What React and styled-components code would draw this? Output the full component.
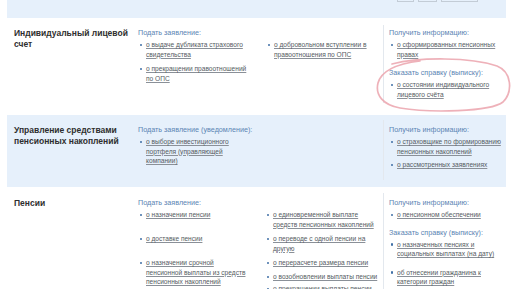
import React from "react";
import styled, { createGlobalStyle } from "styled-components";

const GlobalStyle = createGlobalStyle`
  html, body {
    margin: 0;
    padding: 0;
    background: #ffffff;
  }
  body {
    font-family: "Liberation Sans", Arial, sans-serif;
    overflow: hidden;
  }
`;

const Page = styled.div`
  position: relative;
  margin-left: 7px;
  width: 499px;
`;

const TopBand = styled.div`
  height: 18px;
  background: #e6f0fb;
  display: flex;
  justify-content: flex-end;
  align-items: flex-start;
  gap: 4px;
  padding-right: 28px;
`;

const Tab = styled.div`
  width: ${(p) => p.$w}px;
  height: 1px;
  border: 1px solid #c3ccd6;
  border-top: none;
`;

const Section = styled.section`
  display: grid;
  grid-template-columns: 124px 126px 119px 1px 1fr;
  align-items: start;
  background: ${(p) => (p.$tinted ? "#e6f0fb" : "#ffffff")};
  height: ${(p) => p.$h}px;
  padding: ${(p) => p.$top}px 0 0 7px;
  box-sizing: border-box;
`;

const Title = styled.h2`
  margin: 0;
  font-size: 8.5px;
  line-height: 11px;
  font-weight: 700;
  color: #2e2e2e;
`;

const Column = styled.div`
  padding-left: ${(p) => p.$pad || 0}px;
`;

const Divider = styled.div`
  align-self: stretch;
  background: #e3e8ee;
  margin: ${(p) => p.$m};
`;

const Heading = styled.div`
  font-size: 7.2px;
  line-height: 10px;
  color: #5b84b3;
  margin-top: ${(p) => p.$mt || 0}px;
  white-space: nowrap;
`;

const Spacer = styled.div`
  height: 10px;
`;

const List = styled.ul`
  list-style: none;
  margin: 2px 0 0;
  padding: 0;
`;

const Item = styled.li`
  position: relative;
  padding-left: 8px;
  margin-top: ${(p) => p.$mt || 0}px;
  font-size: 6.6px;
  line-height: 9.5px;
  white-space: nowrap;

  &::before {
    content: "";
    position: absolute;
    left: 2px;
    top: 3.8px;
    width: 2.3px;
    height: 2.3px;
    border-radius: 50%;
    background: #3f6fa6;
  }
`;

const Link = styled.a`
  color: #555b62;
  text-decoration: underline;
  text-decoration-color: #8a9098;
  text-underline-offset: 1px;
`;

const Mark = styled.svg`
  position: absolute;
  left: 0;
  top: 0;
  pointer-events: none;
`;

const L = ({ mt, lines }) => (
  <Item $mt={mt}>
    <Link href="#">
      {lines.map((t, i) => (
        <React.Fragment key={i}>
          {i > 0 && <br />}
          {t}
        </React.Fragment>
      ))}
    </Link>
  </Item>
);

export default function App() {
  return (
    <>
      <GlobalStyle />
      <Page>
        <TopBand>
          <Tab $w={15} />
          <Tab $w={17} />
          <Tab $w={35} />
        </TopBand>

        <Section $h={97} $top={10}>
          <Title>
            Индивидуальный лицевой
            <br />
            счет
          </Title>
          <Column>
            <Heading>Подать заявление:</Heading>
            <List>
              <L lines={["о выдаче дубликата страхового", "свидетельства"]} />
              <L mt={5} lines={["о прекращении правоотношений", "по ОПС"]} />
            </List>
          </Column>
          <Column $pad={2}>
            <Spacer />
            <List>
              <L lines={["о добровольном вступлении в", "правоотношения по ОПС"]} />
            </List>
          </Column>
          <Divider $m="-3px 0 12px" />
          <Column $pad={5}>
            <Heading>Получить информацию:</Heading>
            <List>
              <L lines={["о сформированных пенсионных", "правах"]} />
            </List>
            <Heading $mt={9}>Заказать справку (выписку):</Heading>
            <List>
              <L lines={["о состоянии индивидуального", "лицевого счёта"]} />
            </List>
          </Column>
        </Section>

        <Section $tinted $h={72} $top={10}>
          <Title>
            Управление средствами
            <br />
            пенсионных накоплений
          </Title>
          <Column>
            <Heading>Подать заявление (уведомление):</Heading>
            <List>
              <L lines={["о выборе инвестиционного", "портфеля (управляющей", "компании)"]} />
            </List>
          </Column>
          <Column />
          <Divider $m="-5px 0 7px" />
          <Column $pad={5}>
            <Heading>Получить информацию:</Heading>
            <List>
              <L lines={["о страховщике по формированию", "пенсионных накоплений"]} />
              <L mt={4} lines={["о рассмотренных заявлениях"]} />
            </List>
          </Column>
        </Section>

        <Section $h={110} $top={11}>
          <Title>Пенсии</Title>
          <Column>
            <Heading>Подать заявление:</Heading>
            <List>
              <L lines={["о назначении пенсии"]} />
              <L mt={14.5} lines={["о доставке пенсии"]} />
              <L
                mt={14.5}
                lines={["о назначении срочной", "пенсионной выплаты из средств", "пенсионных накоплений"]}
              />
            </List>
          </Column>
          <Column $pad={1}>
            <Spacer />
            <List>
              <L lines={["о единовременной выплате", "средств пенсионных накоплений"]} />
              <L mt={5} lines={["о переводе с одной пенсии на", "другую"]} />
              <L mt={5} lines={["о перерасчете размера пенсии"]} />
              <L mt={4.5} lines={["о возобновлении выплаты пенсии"]} />
              <L mt={2.5} lines={["о прекращении выплаты пенсии"]} />
            </List>
          </Column>
          <Divider $m="-5px 0 0" />
          <Column $pad={5}>
            <Heading>Получить информацию:</Heading>
            <List>
              <L lines={["о пенсионном обеспечении"]} />
            </List>
            <Heading $mt={8}>Заказать справку (выписку):</Heading>
            <List>
              <L lines={["о назначенных пенсиях и", "социальных выплатах (на дату)"]} />
              <L mt={9} lines={["об отнесении гражданина к", "категории граждан"]} />
            </List>
          </Column>
        </Section>

        <Mark width="516" height="289" viewBox="0 0 516 289" style={{ left: -7 }}>
          <path
            d="M392 64 C 420 57, 470 57, 497 66 C 512 72, 513 92, 503 102 C 490 112, 430 113, 400 108 C 383 105, 375 95, 378 83 C 381 72, 395 64, 420 61"
            fill="none"
            stroke="#eba3ad"
            strokeWidth="1.7"
            strokeLinecap="round"
            opacity="0.85"
          />
        </Mark>
      </Page>
    </>
  );
}
